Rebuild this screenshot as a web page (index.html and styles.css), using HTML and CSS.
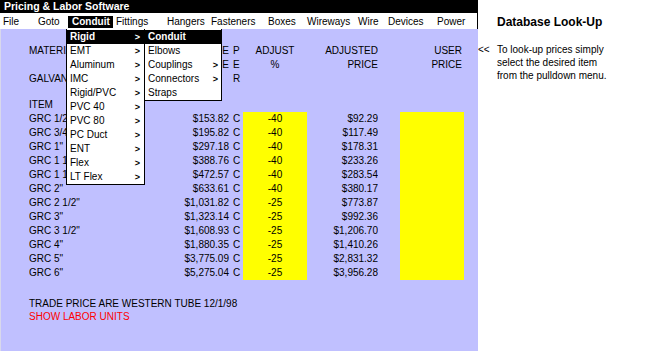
FILE: index.html
```html
<!DOCTYPE html>
<html>
<head>
<meta charset="utf-8">
<title>Pricing &amp; Labor Software</title>
<link rel="stylesheet" href="styles.css">
</head>
<body>
<div class="app">
  <div class="main">
    <div class="titlebar">Pricing &amp; Labor Software</div>
    <nav class="menubar">
      <span class="mi">File</span>
      <span class="mi">Goto</span>
      <span class="mi active">Conduit</span>
      <span class="mi">Fittings</span>
      <span class="mi">Hangers</span>
      <span class="mi">Fasteners</span>
      <span class="mi">Boxes</span>
      <span class="mi">Wireways</span>
      <span class="mi">Wire</span>
      <span class="mi">Devices</span>
      <span class="mi">Power</span>
    </nav>
    <div class="panel">
      <div class="grid head">
        <span class="c1 hid">MATERIAL</span><span class="c2"><i class="clip">TRADE</i></span><span class="c3">P</span><span class="c4">ADJUST</span><span class="c5">ADJUSTED</span><span class="c6"></span><span class="c7">USER</span>
        <span class="c1 hid"></span><span class="c2"><i class="clip">PRICE</i></span><span class="c3">E</span><span class="c4">%</span><span class="c5">PRICE</span><span class="c6"></span><span class="c7">PRICE</span>
        <span class="c1 hid">GALVANIZED RIGID CONDUIT</span><span class="c2"></span><span class="c3">R</span><span class="c4"></span><span class="c5"></span><span class="c6"></span><span class="c7"></span>
      </div>
      <div class="item-label">ITEM</div>
      <div class="grid data">
        <span class="c1 hid">GRC 1/2"</span><span class="c2">$153.82</span><span class="c3">C</span><span class="c4 y">-40</span><span class="c5">$92.29</span><span class="c6"></span><span class="c7 y"></span>
        <span class="c1 hid">GRC 3/4"</span><span class="c2">$195.82</span><span class="c3">C</span><span class="c4 y">-40</span><span class="c5">$117.49</span><span class="c6"></span><span class="c7 y"></span>
        <span class="c1 hid">GRC 1"</span><span class="c2">$297.18</span><span class="c3">C</span><span class="c4 y">-40</span><span class="c5">$178.31</span><span class="c6"></span><span class="c7 y"></span>
        <span class="c1 hid">GRC 1 1/4"</span><span class="c2">$388.76</span><span class="c3">C</span><span class="c4 y">-40</span><span class="c5">$233.26</span><span class="c6"></span><span class="c7 y"></span>
        <span class="c1 hid">GRC 1 1/2"</span><span class="c2">$472.57</span><span class="c3">C</span><span class="c4 y">-40</span><span class="c5">$283.54</span><span class="c6"></span><span class="c7 y"></span>
        <span class="c1">GRC 2"</span><span class="c2">$633.61</span><span class="c3">C</span><span class="c4 y">-40</span><span class="c5">$380.17</span><span class="c6"></span><span class="c7 y"></span>
        <span class="c1">GRC 2 1/2"</span><span class="c2">$1,031.82</span><span class="c3">C</span><span class="c4 y">-25</span><span class="c5">$773.87</span><span class="c6"></span><span class="c7 y"></span>
        <span class="c1">GRC 3"</span><span class="c2">$1,323.14</span><span class="c3">C</span><span class="c4 y">-25</span><span class="c5">$992.36</span><span class="c6"></span><span class="c7 y"></span>
        <span class="c1">GRC 3 1/2"</span><span class="c2">$1,608.93</span><span class="c3">C</span><span class="c4 y">-25</span><span class="c5">$1,206.70</span><span class="c6"></span><span class="c7 y"></span>
        <span class="c1">GRC 4"</span><span class="c2">$1,880.35</span><span class="c3">C</span><span class="c4 y">-25</span><span class="c5">$1,410.26</span><span class="c6"></span><span class="c7 y"></span>
        <span class="c1">GRC 5"</span><span class="c2">$3,775.09</span><span class="c3">C</span><span class="c4 y">-25</span><span class="c5">$2,831.32</span><span class="c6"></span><span class="c7 y"></span>
        <span class="c1">GRC 6"</span><span class="c2">$5,275.04</span><span class="c3">C</span><span class="c4 y">-25</span><span class="c5">$3,956.28</span><span class="c6"></span><span class="c7 y"></span>
      </div>
      <div class="notes">
        <div>TRADE PRICE ARE WESTERN TUBE 12/1/98</div>
        <div class="red">SHOW LABOR UNITS</div>
      </div>
    </div>

    <ul class="menu menu1">
      <li class="sel"><span>Rigid</span><b class="arr">&gt;</b></li>
      <li><span>EMT</span><b class="arr">&gt;</b></li>
      <li><span>Aluminum</span><b class="arr">&gt;</b></li>
      <li><span>IMC</span><b class="arr">&gt;</b></li>
      <li><span>Rigid/PVC</span><b class="arr">&gt;</b></li>
      <li><span>PVC 40</span><b class="arr">&gt;</b></li>
      <li><span>PVC 80</span><b class="arr">&gt;</b></li>
      <li><span>PC Duct</span><b class="arr">&gt;</b></li>
      <li><span>ENT</span><b class="arr">&gt;</b></li>
      <li><span>Flex</span><b class="arr">&gt;</b></li>
      <li><span>LT Flex</span><b class="arr">&gt;</b></li>
    </ul>
    <ul class="menu menu2">
      <li class="sel"><span>Conduit</span></li>
      <li><span>Elbows</span></li>
      <li><span>Couplings</span><b class="arr">&gt;</b></li>
      <li><span>Connectors</span><b class="arr">&gt;</b></li>
      <li><span>Straps</span></li>
    </ul>
  </div>
  <aside class="help">
    <h1 class="help-title">Database Look-Up</h1>
    <div class="help-body">
      <span class="back">&lt;&lt;</span>
      <p>To look-up prices simply<br>select the desired item<br>from the pulldown menu.</p>
    </div>
  </aside>
</div>
</body>
</html>
```

FILE: styles.css
```css
* { box-sizing: border-box; }
html, body {
  margin: 0;
  padding: 0;
  background: #ffffff;
}
body {
  font-family: "Liberation Sans", Arial, sans-serif;
  font-size: 10px;
  color: #000;
  width: 646px;
  height: 351px;
  overflow: hidden;
}
.app {
  display: flex;
  height: 351px;
}
.main {
  position: relative;
  width: 478px;
  display: flex;
  flex-direction: column;
  flex: none;
}
.titlebar {
  height: 13px;
  background: #000;
  color: #fff;
  font-weight: bold;
  font-size: 10.5px;
  line-height: 13px;
  padding-left: 4px;
}
.menubar {
  height: 16px;
  background: #fff;
  border-right: 1px solid #000;
  display: grid;
  grid-template-columns: 35px 33px 45px 51px 44px 57px 39px 51px 30px 49px 29px;
  padding-top: 3px;
  padding-bottom: 1px;
}
.mi {
  line-height: 12px;
  padding-left: 3px;
  white-space: nowrap;
}
.mi.active {
  background: #000;
  color: #fff;
  font-weight: bold;
  padding-left: 4px;
}
.panel {
  flex: 1;
  background: #c0c0ff;
  border-left: 1px solid #d8d8ec;
  padding-left: 28px;
  padding-top: 15px;
}
.grid {
  display: grid;
  grid-template-columns: 141px 60px 13px 64px 71px 22px 64px;
  grid-auto-rows: 14px;
  line-height: 14px;
}
.grid > span {
  white-space: nowrap;
  overflow: hidden;
}
/* part of the item column that lies beneath the open pulldown menu */
.c1.hid { max-width: 37px; }
.c2 { text-align: right; padding-right: 1px; }
.c3 { padding-left: 3px; }
.c4 { text-align: center; }
.c5 { text-align: right; }
.c7 { text-align: right; padding-right: 2px; }
.head .c2 {
  display: flex;
  justify-content: flex-end;
  padding-right: 1px;
}
.clip {
  font-style: normal;
  display: block;
  width: 8px;
  overflow: hidden;
  direction: rtl;
  white-space: nowrap;
}
.y { background: #ffff00; }
.item-label {
  margin-top: 12px;
  line-height: 14px;
  height: 14px;
}
.notes {
  margin-top: 17px;
  line-height: 13px;
}
.red { color: #ff0000; }

.menu {
  position: absolute;
  top: 29px;
  margin: 0;
  padding: 1px 0 0 0;
  list-style: none;
  background: #fff;
  border: 1px solid #000;
  border-top: none;
}
.menu li {
  display: flex;
  justify-content: space-between;
  align-items: center;
  height: 14px;
  line-height: 14px;
  white-space: nowrap;
}
.menu li.sel {
  background: #000;
  color: #fff;
  font-weight: bold;
}
.menu .arr {
  font-size: 9px;
  font-weight: bold;
}
.menu1 {
  left: 66px;
  width: 79px;
}
.menu1 li { padding: 0 4px 0 3px; }
.menu2 {
  left: 144px;
  width: 78px;
}
.menu2 li { padding: 0 3px 0 3px; }

.help {
  flex: 1;
  padding-top: 15px;
}
.help-title {
  margin: 0 0 0 19px;
  font-size: 12px;
  font-weight: bold;
  line-height: 14px;
}
.help-body {
  display: flex;
  margin-top: 14px;
}
.back {
  width: 19px;
  flex: none;
  line-height: 13px;
}
.help-body p {
  margin: 0;
  line-height: 13px;
}
```
